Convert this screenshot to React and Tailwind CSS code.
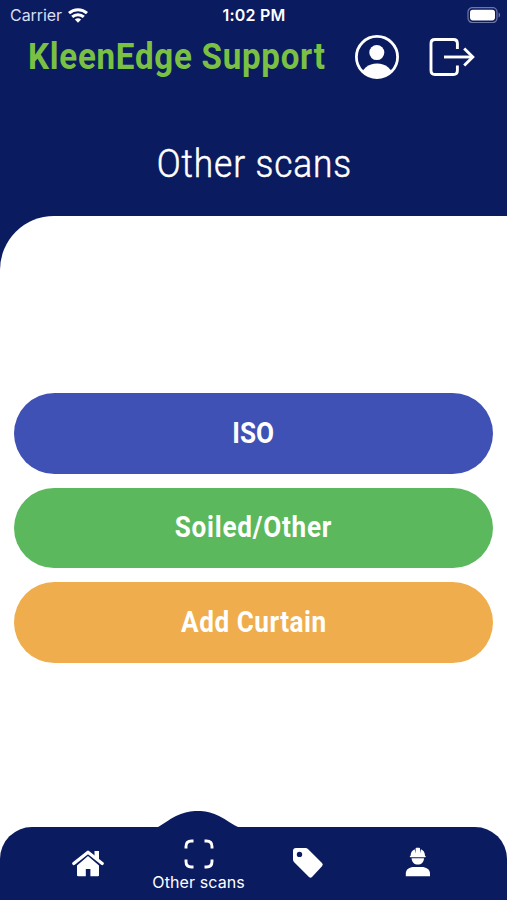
const actions = [
  { label: 'ISO', color: 'bg-[#3f51b5]', text: 'tracking-[0px]' },
  { label: 'Soiled/Other', color: 'bg-[#5cb85c]', text: 'tracking-[0.85px]' },
  { label: 'Add Curtain', color: 'bg-[#f0ad4e]', text: 'tracking-[0.6px]' },
];

const WifiIcon = () => (
  <svg width="20" height="15" viewBox="0 0 20 15" fill="none" stroke="#fff" strokeWidth="3">
    <path d="M1 5.2C6 .6 14 .6 19 5.2" />
    <path d="M4.2 8.9C7.5 5.9 12.5 5.9 15.8 8.9" />
    <path d="M6.9 11.6C8.8 9.8 11.2 9.8 13.1 11.6L10 14.7Z" fill="#fff" stroke="none" />
  </svg>
);

const BatteryIcon = () => (
  <svg width="34" height="16" viewBox="0 0 34 16">
    <rect x="1" y=".7" width="29" height="14.8" rx="4.4" fill="none" stroke="#6e77a6" strokeWidth="1.2" />
    <rect x="3" y="2.8" width="25" height="10.6" rx="2.8" fill="#fff" />
    <path d="M31.6 5.6C33.6 6.4 33.6 9.8 31.6 10.6Z" fill="#6e77a6" />
  </svg>
);

const ProfileIcon = () => (
  <svg width="44" height="44" viewBox="0 0 44 44">
    <clipPath id="profile-clip">
      <circle cx="22" cy="22" r="21" />
    </clipPath>
    <circle cx="22" cy="22" r="20.6" fill="none" stroke="#fff" strokeWidth="2.8" />
    <circle cx="21.8" cy="17.6" r="7.5" fill="#fff" />
    <ellipse cx="22" cy="41" rx="15.6" ry="12.5" fill="#fff" clipPath="url(#profile-clip)" />
  </svg>
);

const LogoutIcon = () => (
  <svg width="46" height="40" viewBox="0 0 46 40" fill="none" stroke="#fff" strokeWidth="2.9">
    <path d="M28.4 12V6.5Q28.4 2.5 24.4 2.5H6Q2 2.5 2 6.5V33.5Q2 37.5 6 37.5H24.4Q28.4 37.5 28.4 33.5V28.5" />
    <path d="M15 20H44" />
    <path d="M35.2 11.5L43.8 20L35.2 28.5" />
  </svg>
);

const HomeIcon = () => (
  <svg width="32" height="27" viewBox="0 0 32 27">
    <path d="M5 15.5L16 6L27 15.5V25.2Q27 26.2 26 26.2H18.4V19H13.8V26.2H6.5Q5 26.2 5 25.2Z" fill="#fff" />
    <path d="M1.6 14.2L16 2.2L30.4 14.2" fill="none" stroke="#0b1b60" strokeWidth="4.9" />
    <path d="M1.8 13.6L16 2.2L30.2 13.6" fill="none" stroke="#fff" strokeWidth="3.2" strokeLinecap="round" strokeLinejoin="round" />
    <path d="M22.5 1H27V10.5L22.5 7Z" fill="#fff" />
  </svg>
);

const ScanIcon = () => (
  <svg width="30" height="30" viewBox="0 0 30 30" fill="none" stroke="#fff" strokeWidth="2.9">
    <path d="M2 9.5V7.5Q2 2 7.5 2H9.5" />
    <path d="M20.5 2H22.5Q28 2 28 7.5V9.5" />
    <path d="M28 20.5V22.5Q28 28 22.5 28H20.5" />
    <path d="M9.5 28H7.5Q2 28 2 22.5V20.5" />
  </svg>
);

const TagIcon = () => (
  <svg width="32" height="32" viewBox="0 0 32 32" fill="#fff">
    <path
      fillRule="evenodd"
      d="M4 1H13.5Q15 1 16.2 2.2L30 16Q31.6 17.6 30 19.2L20 30Q18.5 31.5 17 30L2.2 15.2Q1 14 1 12.5V4Q1 1 4 1ZM7.5 4.7A2.7 2.7 0 1 0 7.5 10.1A2.7 2.7 0 1 0 7.5 4.7Z"
    />
  </svg>
);

const WorkerIcon = () => (
  <svg width="26" height="30" viewBox="0 0 26 30" fill="#fff">
    <path d="M5.6 8.7C5.6 5.5 7.4 3.2 9.7 2.3L10.6 6.5V1.5Q10.6 .8 11.4 .8H14.2Q15 .8 15 1.5V6.5L15.9 2.3C18.4 3.2 20 5.5 20 8.7Q20.8 8.8 20.8 9.6Q20.8 10.3 20 10.3H5.6Q4.8 10.3 4.8 9.6Q4.8 8.8 5.6 8.7Z" />
    <path d="M6.6 11.2H19C18.8 15.4 16.2 17.5 12.8 17.5S6.8 15.4 6.6 11.2Z" />
    <path d="M.8 29.2V26.5C.8 22.3 4.5 20 9 20H16.6C21 20 25 22.3 25 26.5V29.2Z" />
  </svg>
);

const TabBar = () => (
  <nav className="relative h-[73.5px] shrink-0 rounded-t-[32px] bg-[#0b1b60]">
    <svg className="absolute left-[156px] top-[-16px]" width="84" height="18" viewBox="0 0 84 18">
      <path d="M0 17C7 13.5 12 9 20 5C35 -1.8 49 -1.8 63 5C71 9 76 13.5 84 17V18H0Z" fill="#0b1b60" />
    </svg>
    <div className="relative flex h-full px-[33px]">
      <button className="flex w-[110px] justify-center pt-[23px]">
        <HomeIcon />
      </button>
      <button className="flex w-[112px] flex-col items-center pt-3">
        <ScanIcon />
        <span className="mt-[3px] whitespace-nowrap text-[16px] leading-5 tracking-[0.1px] font-['Inter',sans-serif]">
          Other scans
        </span>
      </button>
      <button className="flex w-[108px] justify-center pt-[20px]">
        <TagIcon />
      </button>
      <button className="flex w-[112px] justify-center pt-[20px]">
        <WorkerIcon />
      </button>
    </div>
  </nav>
);

export default function App() {
  return (
    <div className="flex h-screen w-full flex-col overflow-hidden bg-[#0b1b60] font-['Roboto',sans-serif] text-white">
      <div className="grid h-[30px] shrink-0 grid-cols-3 items-center pl-[10px] pr-[6px] font-['Inter',sans-serif] text-[16px]">
        <div className="flex items-center gap-[6px]">
          <span className="tracking-[-0.05px] text-[#d9def2]">Carrier</span>
          <WifiIcon />
        </div>
        <span className="mr-[3px] text-center font-semibold tracking-[0.2px]">1:02 PM</span>
        <div className="flex justify-end">
          <BatteryIcon />
        </div>
      </div>

      <header className="flex h-[54px] shrink-0 items-center pl-[28px]">
        <h1 className="w-[327px] origin-left scale-x-[0.92] whitespace-nowrap text-[36px] font-bold tracking-[0.8px] text-[#7ac143]">
          KleenEdge Support
        </h1>
        <button>
          <ProfileIcon />
        </button>
        <button className="ml-[30px]">
          <LogoutIcon />
        </button>
      </header>

      <h2 className="flex h-[132px] shrink-0 scale-x-[0.93] items-center justify-center pl-[2px] pt-[29px] text-[38px] font-light tracking-[0.9px] [-webkit-text-stroke:0.5px_#fff]">
        Other scans
      </h2>

      <div className="flex min-h-0 flex-1 flex-col rounded-tl-[54px] bg-white">
        <main className="flex flex-1 flex-col gap-[14px] px-[14px] pt-[177px]">
          {actions.map((action) => (
            <button key={action.label} className={`h-[80.5px] w-full rounded-full text-[29px] font-bold ${action.color}`}>
              <span className={`inline-block scale-x-[0.9] ${action.text}`}>{action.label}</span>
            </button>
          ))}
        </main>
        <TabBar />
      </div>
    </div>
  );
}
